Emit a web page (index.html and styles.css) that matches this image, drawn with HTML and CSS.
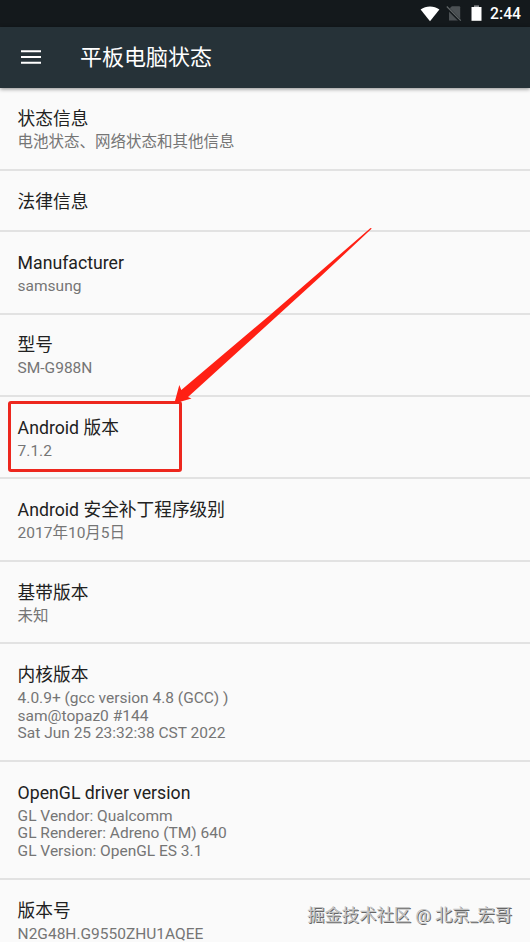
FILE: index.html
```html
<!DOCTYPE html>
<html lang="zh-CN">
<head>
<meta charset="utf-8">
<title>平板电脑状态</title>
<link rel="stylesheet" href="styles.css">
</head>
<body>
<div class="screen">
  <div class="status-bar">
    <svg class="wifi" width="20" height="16" viewBox="0 0 20 16"><path d="M.6 3.5C6-.6 14-.6 19.4 3.5L10 15.3z" fill="#fff"/></svg>
    <svg class="sim" width="16" height="17" viewBox="0 0 16 17"><path d="M5.8 1.2h7.4q1 0 1 1v13.3H3V4.1z" fill="#4c5154"/><path d="M0 1.6 14.6 16.2" stroke="#14191c" stroke-width="3"/><path d="M.8 1.5 14.8 15.7" stroke="#63686a" stroke-width="1.2"/></svg>
    <svg class="battery" width="11" height="17" viewBox="0 0 11 17"><path d="M3 .4h5v2H3z" fill="#8b8e90"/><path d="M.5 2h10v13.8H.5z" fill="#fff"/></svg>
    <span class="clock">2:44</span>
  </div>
  <header class="app-bar">
    <svg width="20" height="14" viewBox="0 0 20 14"><path d="M0 1.3h20M0 7h20M0 12.7h20" stroke="#fff" stroke-width="2"/></svg>
    <h1>平板电脑状态</h1>
  </header>
  <main class="list">
    <section class="row"><h2>状态信息</h2><p>电池状态、网络状态和其他信息</p></section>
    <section class="row single"><h2>法律信息</h2></section>
    <section class="row"><h2>Manufacturer</h2><p>samsung</p></section>
    <section class="row"><h2>型号</h2><p>SM-G988N</p></section>
    <section class="row marked"><h2>Android 版本</h2><p>7.1.2</p></section>
    <section class="row"><h2>Android 安全补丁程序级别</h2><p>2017年10月5日</p></section>
    <section class="row"><h2>基带版本</h2><p>未知</p></section>
    <section class="row"><h2>内核版本</h2><p>4.0.9+ (gcc version 4.8 (GCC) )<br>sam@topaz0 #144<br>Sat Jun 25 23:32:38 CST 2022</p></section>
    <section class="row"><h2>OpenGL driver version</h2><p>GL Vendor: Qualcomm<br>GL Renderer: Adreno (TM) 640<br>GL Version: OpenGL ES 3.1</p></section>
    <section class="row"><h2>版本号</h2><p>N2G48H.G9550ZHU1AQEE</p></section>
  </main>
  <svg class="arrow" width="200" height="178" viewBox="173 227 200 178"><path d="M371.8 228.6 320 277 188 397 191.5 398.5 174.3 403.5 179.3 385 181.3 390 270 315 370.5 228z" fill="#ff2014"/></svg>
  <div class="watermark">掘金技术社区 @ 北京_宏哥</div>
</div>
</body>
</html>
```
FILE: styles.css
```css
*, *::after { box-sizing: border-box; }
body { margin: 0; }
.screen {
  position: relative;
  width: 530px;
  height: 942px;
  overflow: hidden;
  background: #fafafa;
  font-family: Roboto, "Noto Sans CJK SC", sans-serif;
}
.status-bar {
  display: flex;
  align-items: center;
  justify-content: flex-end;
  height: 26.6px;
  padding: 1px 9px 0 0;
  background: #14191c;
}
.sim { margin-left: 6px; }
.battery { margin-left: 9px; }
.clock {
  margin-left: 8px;
  color: #fff;
  font-size: 15.7px;
  font-weight: 500;
  line-height: 26px;
}
.app-bar {
  position: relative;
  z-index: 1;
  display: flex;
  align-items: center;
  height: 61.8px;
  padding-left: 21px;
  background: #263238;
  box-shadow: 0 1px 4px rgba(0, 0, 0, .45);
}
h1 {
  margin: 0 0 0 39px;
  padding-top: 2px;
  color: #fff;
  font-size: 22px;
  font-weight: 400;
  line-height: 30px;
}
.row {
  position: relative;
  padding: 18.7px 17.6px 16px;
  border-bottom: 2px solid #e2e2e2;
}
h2, p { margin: 0; font-weight: 400; white-space: nowrap; }
h2 { color: #212121; font-size: 17.7px; line-height: 25.4px; }
p { padding: 1.6px 0 1.1px; color: #757575; font-size: 15.5px; line-height: 17.65px; }
.single { height: 61.3px; }
.marked::after {
  content: "";
  position: absolute;
  left: 8px;
  top: 4px;
  width: 174px;
  height: 71px;
  border: 3px solid #ed271e;
  border-radius: 3px;
}
.arrow { position: absolute; left: 173px; top: 227px; }
.watermark {
  position: absolute;
  right: 18px;
  bottom: 15px;
  color: #c4c4c4;
  font-size: 17.3px;
  line-height: 24px;
  white-space: nowrap;
  text-shadow: 1px 1px 0 #666;
}
```
